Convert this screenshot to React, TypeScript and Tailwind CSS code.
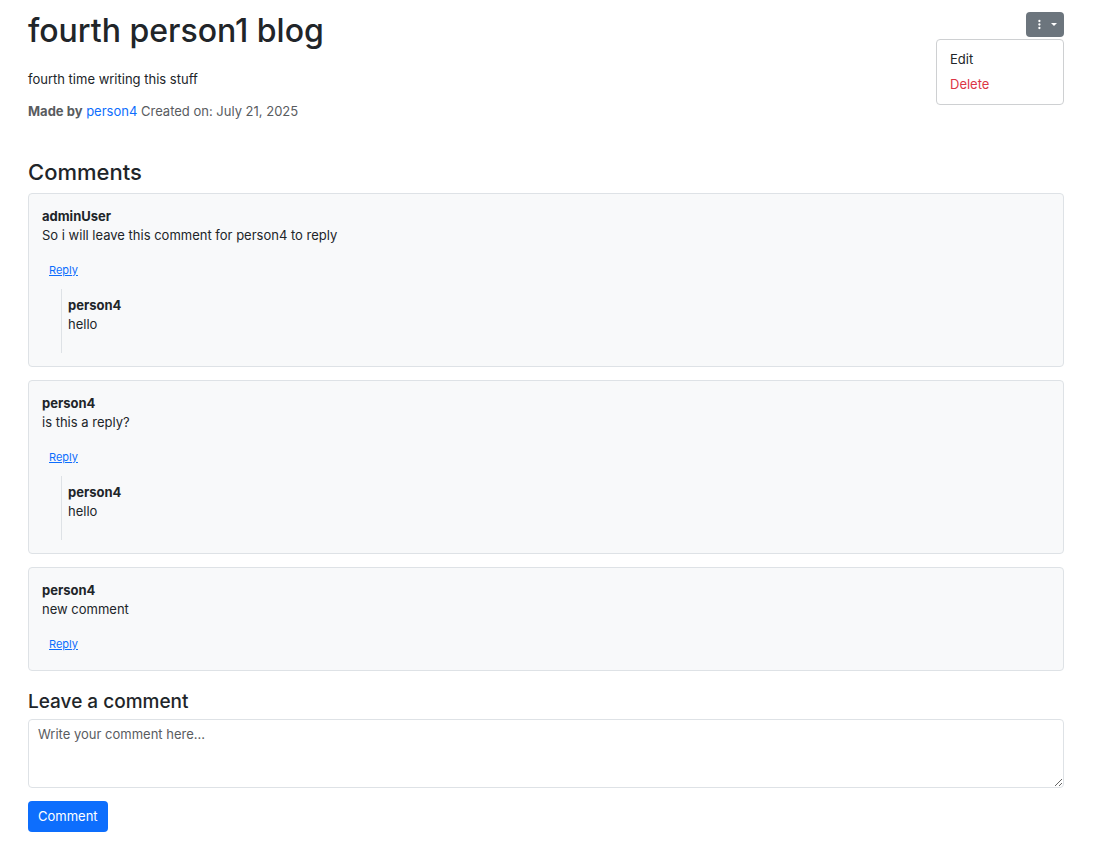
import { useState } from "react";

type Entry = { author: string; text: string };
type Thread = Entry & { replies: Entry[] };

const threads: Thread[] = [
  {
    author: "adminUser",
    text: "So i will leave this comment for person4 to reply",
    replies: [{ author: "person4", text: "hello" }],
  },
  {
    author: "person4",
    text: "is this a reply?",
    replies: [{ author: "person4", text: "hello" }],
  },
  { author: "person4", text: "new comment", replies: [] },
];

function PostMenu() {
  const [open, setOpen] = useState(true);
  return (
    <div className="relative">
      <button
        type="button"
        aria-label="Post actions"
        aria-expanded={open}
        onClick={() => setOpen(!open)}
        className="flex h-[25px] items-center gap-[10px] rounded bg-[#6c757d] pr-[7px] pl-[11px] text-white"
      >
        <svg width="4" height="11" viewBox="0 0 4 11" fill="currentColor" aria-hidden="true">
          <circle cx="2.4" cy="2" r="1.15" />
          <circle cx="2.4" cy="5.5" r="1.15" />
          <circle cx="2.4" cy="9" r="1.15" />
        </svg>
        <svg width="6" height="3" viewBox="0 0 6 3" fill="currentColor" aria-hidden="true">
          <path d="M0 0h6L3 3z" />
        </svg>
      </button>
      {open && (
        <ul className="absolute top-full right-0 mt-0.5 w-32 rounded border border-[#ced0d2] bg-white py-[7px]">
          <li>
            <a href="#edit" className="block px-[13px] py-[3px]">
              Edit
            </a>
          </li>
          <li>
            <button type="button" className="block w-full px-[13px] py-[3px] text-left text-[#dc3545]">
              Delete
            </button>
          </li>
        </ul>
      )}
    </div>
  );
}

function Comment({ author, text, replies }: Thread) {
  return (
    <li className="rounded border border-[#dee2e6] bg-[#f8f9fa] p-[13px]">
      <p className="font-bold">{author}</p>
      <p>{text}</p>
      <button type="button" className="mt-3 block px-[7px] py-1 text-[11px] leading-[18px] text-[#0d6efd] underline">
        Reply
      </button>
      {replies.length > 0 && (
        <ul className="mt-[6px] ml-[19px]">
          {replies.map((reply, i) => (
            <li key={i} className="border-l border-[#dee2e6] pt-[7px] pb-[19px] pl-[6px]">
              <p className="font-bold">{reply.author}</p>
              <p>{reply.text}</p>
            </li>
          ))}
        </ul>
      )}
    </li>
  );
}

export default function App() {
  return (
    <main className="pt-3 pr-[41px] pb-3 pl-7 font-['Inter',sans-serif] text-[13px] leading-[19px] text-[#212529]">
      <header className="flex items-start justify-between">
        <h1 className="text-[32px] leading-[38px] font-medium">fourth person1 blog</h1>
        <PostMenu />
      </header>
      <p className="mt-5">fourth time writing this stuff</p>
      <p className="mt-[13px] text-[#595c5f]">
        <strong>Made by</strong>{" "}
        <a href="#person4" className="text-[#0d6efd]">
          person4
        </a>{" "}
        Created on: July 21, 2025
      </p>
      <h2 className="mt-[38px] text-[22px] leading-[26px] font-medium">Comments</h2>
      <ul className="mt-2 flex flex-col gap-[13px]">
        {threads.map((thread, i) => (
          <Comment key={i} {...thread} />
        ))}
      </ul>
      <form className="mt-[19px]" onSubmit={(e) => e.preventDefault()}>
        <label htmlFor="comment" className="block text-[19px] leading-[23px] font-medium">
          Leave a comment
        </label>
        <textarea
          id="comment"
          placeholder="Write your comment here..."
          className="mt-[6px] block h-[69px] w-full rounded border border-[#dee2e6] px-[9px] py-[5px] placeholder:text-[#595c5f]"
        />
        <button type="submit" className="mt-[13px] h-[31px] rounded bg-[#0d6efd] px-[10px] text-white">
          Comment
        </button>
      </form>
    </main>
  );
}
